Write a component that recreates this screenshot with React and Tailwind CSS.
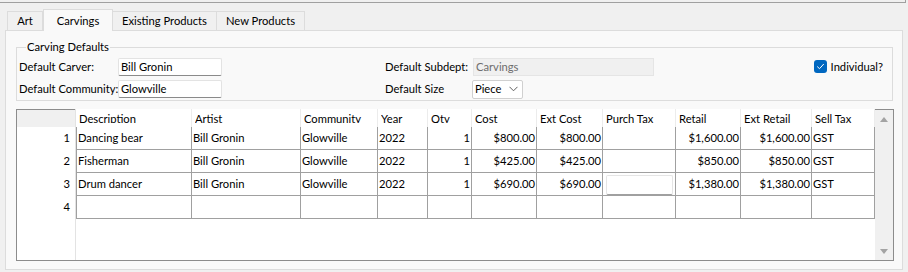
import React from "react";

const cols = [
  { key: "desc", label: "Description", w: "w-[116px]", first: true },
  { key: "artist", label: "Artist", w: "w-[109px]" },
  { key: "comm", label: "Community", w: "w-[77px]" },
  { key: "year", label: "Year", w: "w-[50px]" },
  { key: "qty", label: "Qty", w: "w-[44px]", right: true },
  { key: "cost", label: "Cost", w: "w-[65px]", right: true },
  { key: "ext", label: "Ext Cost", w: "w-[66px]", right: true },
  { key: "ptax", label: "Purch Tax", w: "w-[73px]" },
  { key: "retail", label: "Retail", w: "w-[65px]", right: true },
  { key: "extr", label: "Ext Retail", w: "w-[71px]", right: true },
  { key: "stax", label: "Sell Tax", w: "w-[63px]" },
];

const rows = [
  { desc: "Dancing bear", artist: "Bill Gronin", comm: "Glowville", year: "2022", qty: "1", cost: "$800.00", ext: "$800.00", ptax: "", retail: "$1,600.00", extr: "$1,600.00", stax: "GST" },
  { desc: "Fisherman", artist: "Bill Gronin", comm: "Glowville", year: "2022", qty: "1", cost: "$425.00", ext: "$425.00", ptax: "", retail: "$850.00", extr: "$850.00", stax: "GST" },
  { desc: "Drum dancer", artist: "Bill Gronin", comm: "Glowville", year: "2022", qty: "1", cost: "$690.00", ext: "$690.00", ptax: "", retail: "$1,380.00", extr: "$1,380.00", stax: "GST", editing: true },
  { desc: "", artist: "", comm: "", year: "", qty: "", cost: "", ext: "", ptax: "", retail: "", extr: "", stax: "" },
];

function Tab({ label, w, selected }) {
  return selected ? (
    <div className={`${w} h-[22px] bg-[#f9f9f9] border border-b-0 border-[#dcdcdc] relative z-10 -mb-px flex items-start justify-center pt-[3px] whitespace-nowrap`}>
      {label}
    </div>
  ) : (
    <div className={`${w} h-[19px] bg-[#f0f0f0] border border-b-0 border-[#dcdcdc] -ml-px first:ml-0 flex items-center justify-center whitespace-nowrap`}>
      {label}
    </div>
  );
}

function TextBox({ value, w }) {
  return (
    <div className={`${w} h-[18px] bg-white border border-[#e3e3e3] border-b-[#8a8a8a] rounded-[2px] flex items-center px-[2px] leading-none whitespace-nowrap`}>
      {value}
    </div>
  );
}

export default function App() {
  return (
    <div className="w-[908px] h-[272px] bg-[#f0f0f0] overflow-hidden text-[11.2px] text-black font-['Lato',sans-serif]">
      <div className="h-[3px] mr-[2px] border-b border-r border-[#a0a0a0]" />
      <div className="flex items-end h-[27px] pl-[7px]">
        <Tab label="Art" w="w-[36px]" />
        <Tab label="Carvings" w="w-[70px]" selected />
        <Tab label="Existing Products" w="w-[105px]" />
        <Tab label="New Products" w="w-[89px]" />
      </div>
      <div className="mx-[5px] h-[240px] bg-[#f9f9f9] border border-[#dcdcdc] pl-[10px] pr-[9px] pt-[8px]">
        <fieldset className="border border-[#dcdcdc] px-[2px] pb-[2px] pt-[3px]">
          <legend className="ml-[7px] px-[1px] leading-[16px] whitespace-nowrap">Carving Defaults</legend>
          <div className="flex flex-col gap-[4px] whitespace-nowrap">
            <div className="flex items-center h-[18px]">
              <div className="w-[99px]">Default Carver:</div>
              <TextBox value="Bill Gronin" w="w-[104px]" />
              <div className="w-[163px]" />
              <div className="w-[88px]">Default Subdept:</div>
              <div className="w-[181px] h-[18px] bg-[#f0f0f0] border border-[#e5e5e5] flex items-center px-[2px] text-[#6d6d6d]">
                Carvings
              </div>
              <div className="ml-auto mr-[7px] flex items-center gap-[4px]">
                <div className="w-[13px] h-[13px] rounded-[3px] bg-[#0067c0] flex items-center justify-center">
                  <svg width="9" height="9" viewBox="0 0 9 9" fill="none">
                    <path d="M1.5 4.8 L3.5 6.7 L7.5 2.3" stroke="white" strokeWidth="1" strokeLinecap="round" strokeLinejoin="round" />
                  </svg>
                </div>
                <span>Individual?</span>
              </div>
            </div>
            <div className="flex items-center h-[18px]">
              <div className="w-[99px]">Default Community:</div>
              <TextBox value="Glowville" w="w-[104px]" />
              <div className="w-[163px]" />
              <div className="w-[87px]">Default Size</div>
              <div className="w-[51px] h-[19px] bg-white border border-[#d0d0d0] rounded-[2px] flex items-center justify-between pl-[2px] pr-[4px]">
                <span>Piece</span>
                <svg width="9" height="6" viewBox="0 0 9 6" fill="none">
                  <path d="M0.5 0.8 L4.5 4.8 L8.5 0.8" stroke="#606060" strokeWidth="1" />
                </svg>
              </div>
            </div>
          </div>
        </fieldset>

        <div className="mt-[8px] w-[878px] h-[152px] border-l border-r border-b border-[#8c8c8c] flex">
          <div className="w-[59px] flex flex-col bg-white border-r border-[#e3e3e3]">
            <div className="h-[18px] bg-[#f0f0f0] border-t border-[#8c8c8c]" />
            {rows.map((r, i) => (
              <div key={i} className="h-[23px] flex items-center justify-end pr-[5px]">
                {i + 1}
              </div>
            ))}
          </div>
          <div className="w-[799px] flex flex-col bg-white">
            <div className="h-[18px] flex">
              {cols.map((c) => (
                <div key={c.key} className={`${c.w} h-[18px] border-r border-[#ececec] pl-[3px] whitespace-nowrap`}>
                  <div className="h-[14px] overflow-hidden leading-[16px] pt-[2px]">{c.label}</div>
                </div>
              ))}
            </div>
            {rows.map((r, i) => (
              <div key={i} className="h-[23px] flex">
                {cols.map((c) => (
                  <div
                    key={c.key}
                    className={`${c.w} h-[23px] border-r border-b border-[#a0a0a0] ${c.first ? "border-l" : ""} flex items-center ${c.right ? "justify-end pr-[1px]" : "pl-[1px]"} whitespace-nowrap`}
                  >
                    {r.editing && c.key === "ptax" ? (
                      <div className="w-full h-[20px] mx-[2px] mt-[1px] bg-white border border-[#e5e5e5] border-b-[#a0a0a0] rounded-[2px]" />
                    ) : (
                      r[c.key]
                    )}
                  </div>
                ))}
              </div>
            ))}
            <div className="flex-1" />
          </div>
          <div className="w-[18px] bg-[#f0f0f0] border-t border-[#8c8c8c] flex flex-col items-center justify-between pt-[7px] pb-[6px]">
            <svg width="8" height="5" viewBox="0 0 8 5">
              <path d="M0 5 L4 0 L8 5 Z" fill="#a3a3a3" />
            </svg>
            <svg width="8" height="5" viewBox="0 0 8 5">
              <path d="M0 0 L4 5 L8 0 Z" fill="#a3a3a3" />
            </svg>
          </div>
        </div>
      </div>
    </div>
  );
}
